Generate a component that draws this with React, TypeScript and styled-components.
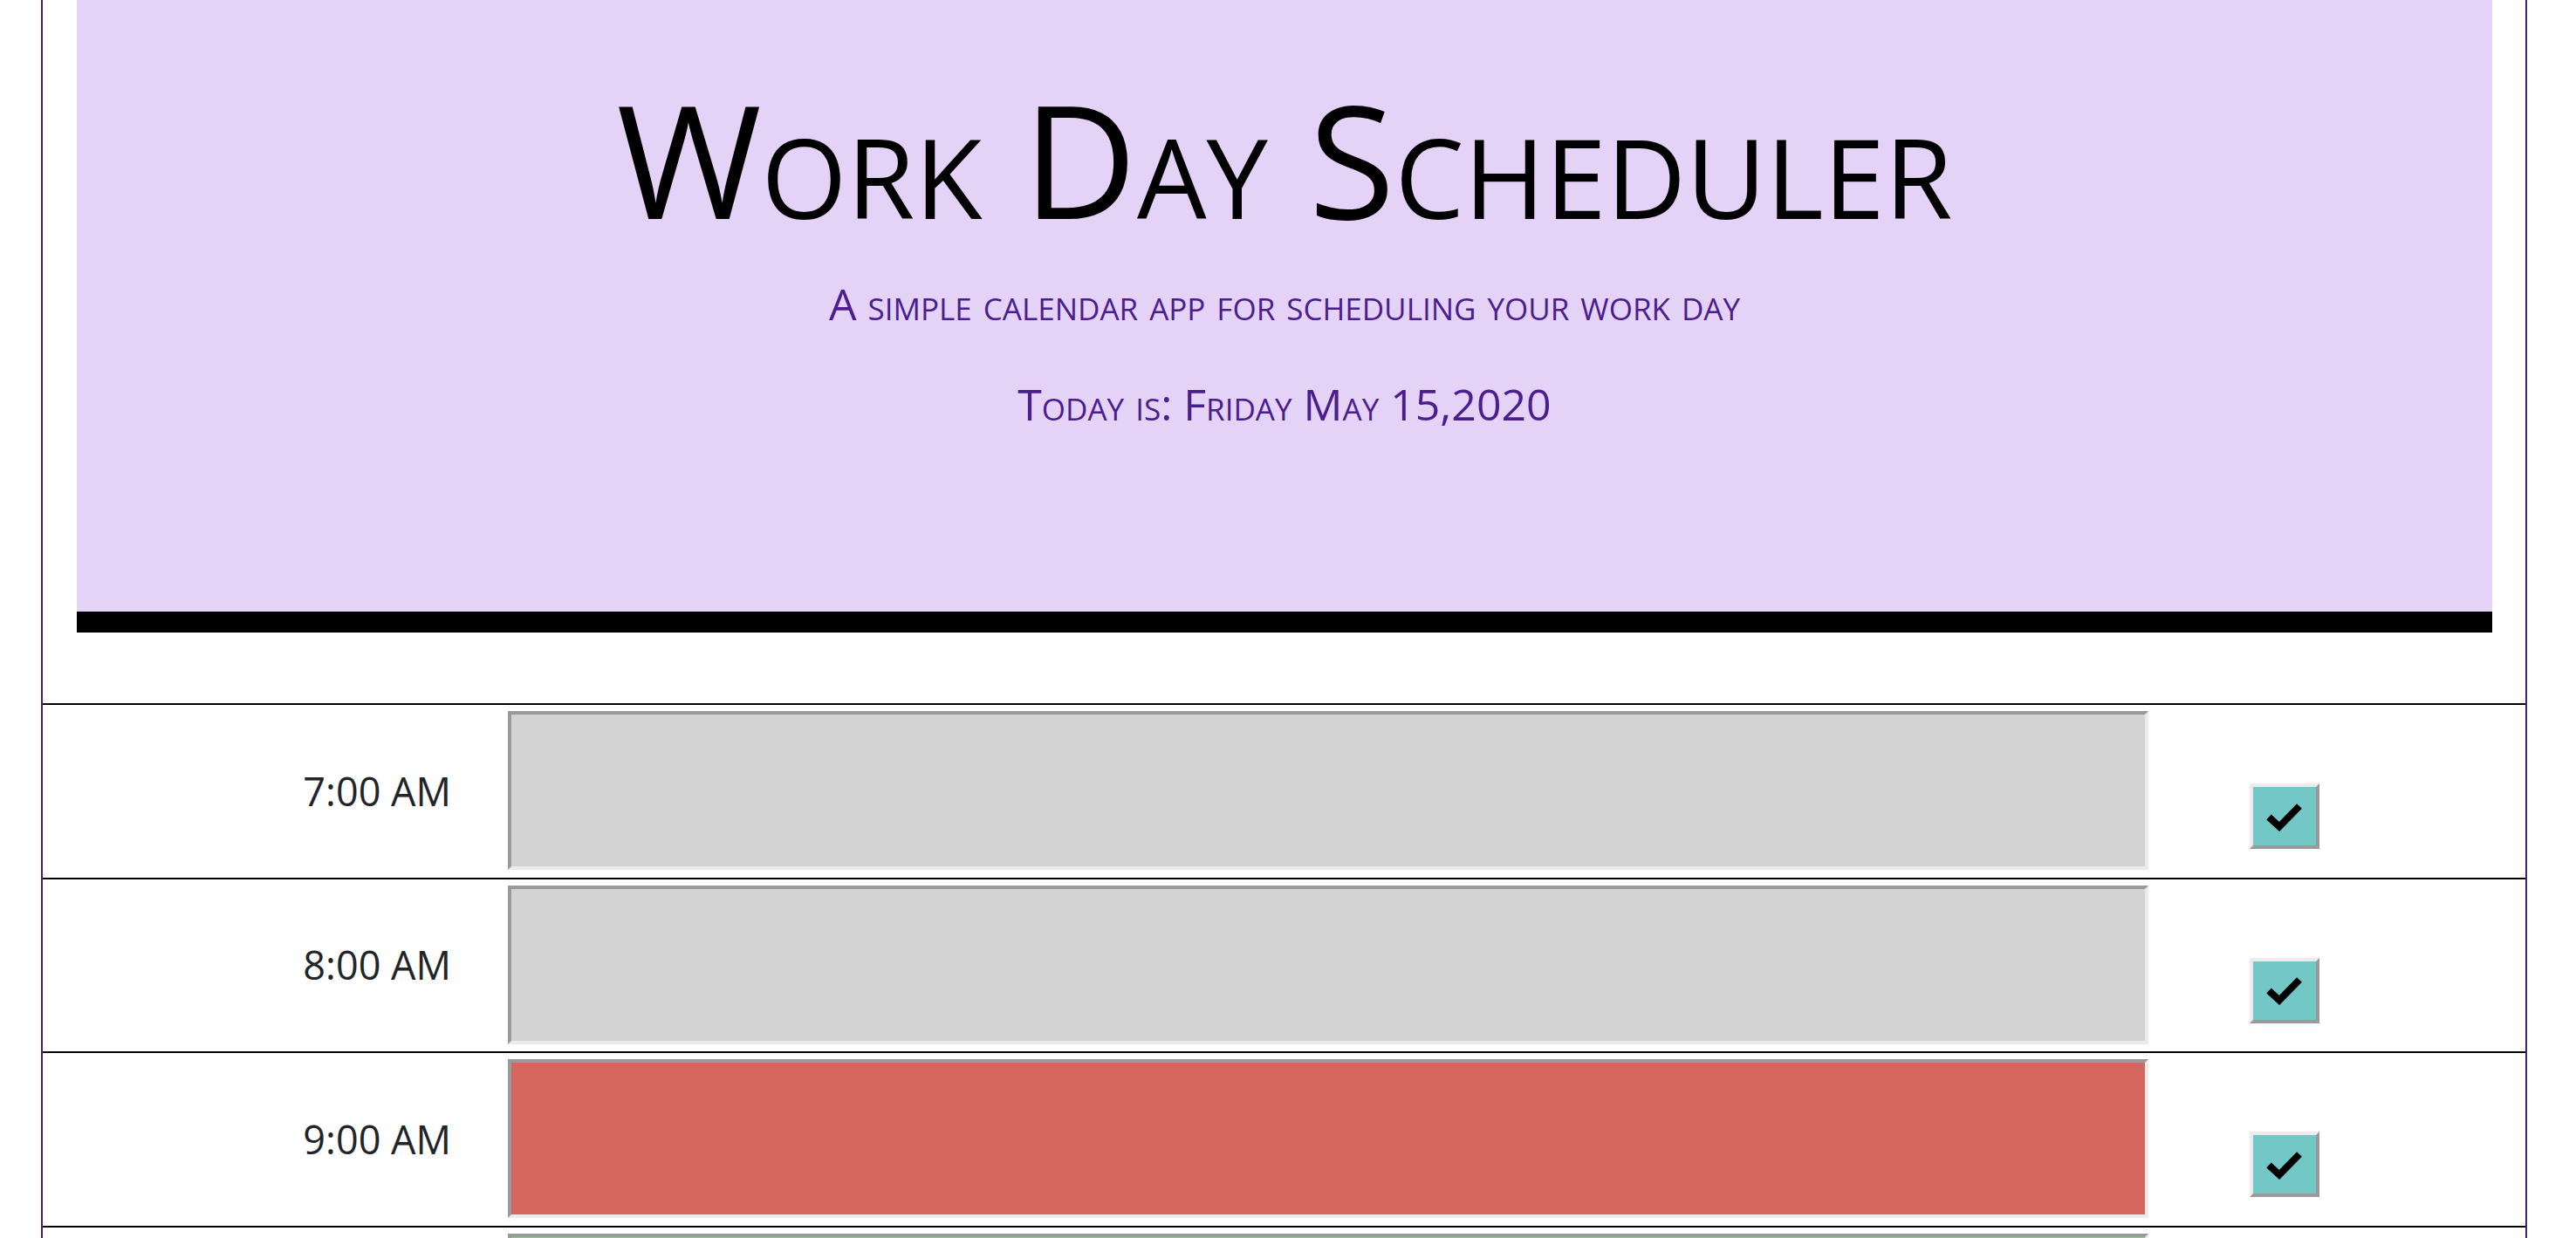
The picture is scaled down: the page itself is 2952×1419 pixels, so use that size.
import React from "react";
import styled, { createGlobalStyle } from "styled-components";

const GlobalStyle = createGlobalStyle`
  html, body {
    margin: 0;
    padding: 0;
    background: #ffffff;
    overflow: hidden;
  }
  body {
    font-family: "Open Sans", "Liberation Sans", sans-serif;
    color: #212529;
  }
  * { box-sizing: border-box; }
`;

const Page = styled.div`
  width: 2849px;
  margin-left: 47px;
  border-left: 2px solid #46207f;
  border-right: 2px solid #46207f;
  min-height: 1419px;
`;

const Header = styled.header`
  margin: 0 38px 0 39px;
  background: #e4d3f7;
  border-bottom: 24px solid #000000;
  padding: 92px 0 213px;
  text-align: center;
  font-variant: small-caps;
`;

const Title = styled.h1`
  margin: 0;
  font-family: "Open Sans", "Liberation Sans", sans-serif;
  font-weight: 400;
  font-size: 180px;
  line-height: 1;
  color: #000000;
`;

const Lead = styled.p<{ $size: number; $gap: number }>`
  margin: ${(p) => p.$gap}px 0 0;
  font-size: ${(p) => p.$size}px;
  line-height: 1;
  font-weight: 400;
  color: #4b1d8e;
`;

const Schedule = styled.main`
  margin-top: 81px;
`;

const Row = styled.div`
  display: flex;
  align-items: flex-start;
  border-top: 2px solid #000000;
  padding: 7px 0 8.5px;
`;

const Hour = styled.div`
  width: 533px;
  height: 182px;
  padding-right: 65px;
  display: flex;
  align-items: center;
  justify-content: flex-end;
  font-size: 45px;
  color: #212529;
`;

const Description = styled.textarea<{ $tone: "past" | "present" | "future" }>`
  display: block;
  width: 1880px;
  height: 182px;
  margin: 0;
  padding: 10px;
  resize: none;
  font-family: "Open Sans", "Liberation Sans", sans-serif;
  font-size: 40px;
  color: #000000;
  outline: none;
  background: ${(p) =>
    p.$tone === "past" ? "#d3d3d3" : p.$tone === "present" ? "#d4665f" : "#8fd18f"};
  border-style: solid;
  border-width: 4px;
  border-color: #9a9a9a #ebebeb #ebebeb #9a9a9a;
`;

const SaveButton = styled.button`
  width: 80px;
  height: 75px;
  margin: 83px 0 0 116px;
  padding: 0;
  display: flex;
  align-items: center;
  justify-content: center;
  background: #74c7c7;
  border-style: solid;
  border-width: 4px;
  border-color: #ebebeb #9a9a9a #9a9a9a #ebebeb;
  color: #000000;
  cursor: pointer;
`;

const CheckIcon = () => (
  <svg width="42" height="34" viewBox="0 0 42 34" aria-hidden="true">
    <path
      d="M3 17.5 L15 28.5 L38 5"
      fill="none"
      stroke="#000000"
      strokeWidth="8"
      strokeLinecap="butt"
      strokeLinejoin="miter"
    />
  </svg>
);

type Tone = "past" | "present" | "future";

const hours: { label: string; tone: Tone }[] = [
  { label: "7:00 AM", tone: "past" },
  { label: "8:00 AM", tone: "past" },
  { label: "9:00 AM", tone: "present" },
  { label: "10:00 AM", tone: "future" },
  { label: "11:00 AM", tone: "future" },
  { label: "12:00 PM", tone: "future" },
  { label: "1:00 PM", tone: "future" },
  { label: "2:00 PM", tone: "future" },
  { label: "3:00 PM", tone: "future" },
  { label: "4:00 PM", tone: "future" },
  { label: "5:00 PM", tone: "future" },
];

export default function App() {
  return (
    <>
      <GlobalStyle />
      <Page>
        <Header>
          <Title>Work Day Scheduler</Title>
          <Lead $size={50} $gap={51}>A simple calendar app for scheduling your work day</Lead>
          <Lead $size={50} $gap={65}>Today is: Friday May 15,2020</Lead>
        </Header>
        <Schedule>
          {hours.map((h) => (
            <Row key={h.label}>
              <Hour>{h.label}</Hour>
              <Description $tone={h.tone} aria-label={h.label} />
              <SaveButton aria-label="save">
                <CheckIcon />
              </SaveButton>
            </Row>
          ))}
        </Schedule>
      </Page>
    </>
  );
}
